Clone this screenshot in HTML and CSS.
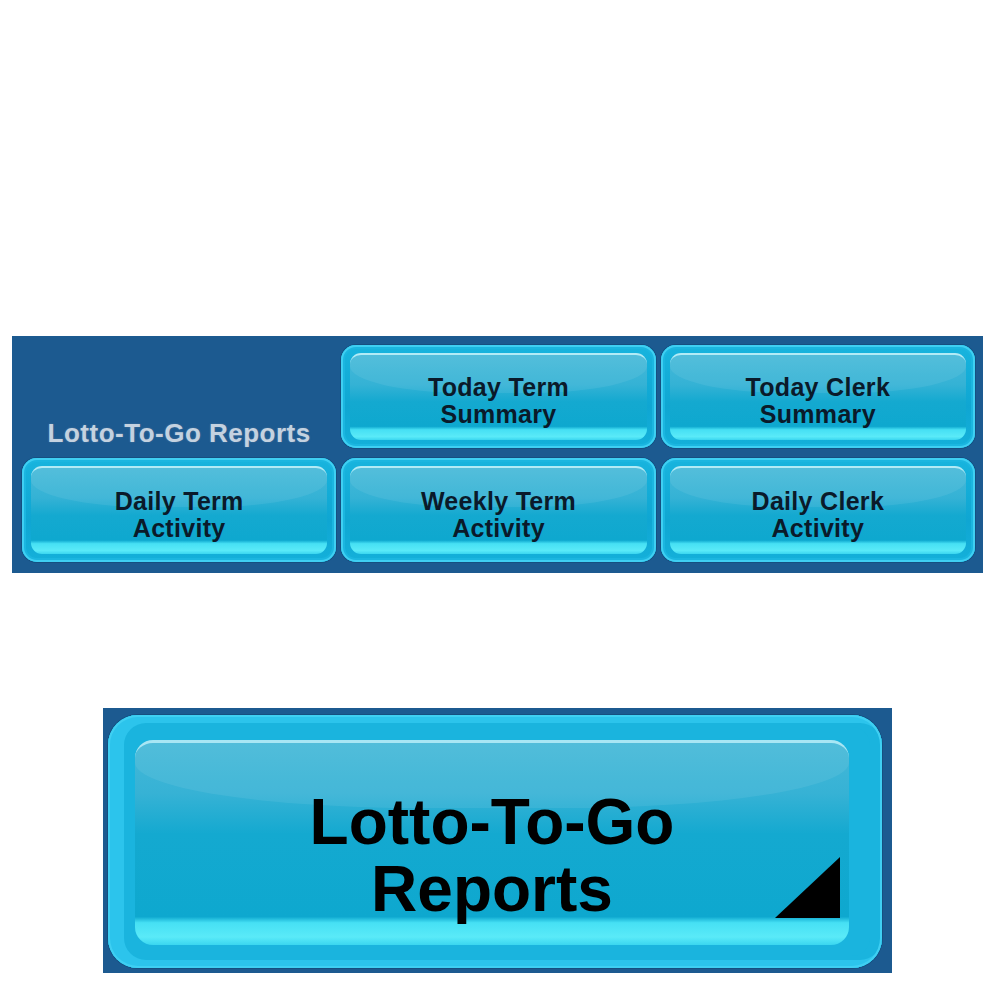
FILE: index.html
```html
<!DOCTYPE html>
<html lang="en">
<head>
    <meta charset="UTF-8">
    <meta name="viewport" content="width=device-width, initial-scale=1.0">
    <title>Lotto-To-Go Reports</title>
    <link rel="stylesheet" href="styles.css">
</head>
<body>
    <div class="page">
        <!-- report menu -->
        <div class="panel report-menu">
            <div class="menu-title">Lotto-To-Go Reports</div>
            <button class="key" type="button"><span class="face">Today Term<br>Summary</span></button>
            <button class="key" type="button"><span class="face">Today Clerk<br>Summary</span></button>
            <button class="key" type="button"><span class="face">Daily Term<br>Activity</span></button>
            <button class="key" type="button"><span class="face">Weekly Term<br>Activity</span></button>
            <button class="key" type="button"><span class="face">Daily Clerk<br>Activity</span></button>
        </div>

        <!-- big launcher button -->
        <div class="panel launcher">
            <button class="key key-big" type="button">
                <span class="face">Lotto-To-Go<br>Reports
                    <svg class="corner" viewBox="0 0 65 61" width="65" height="61">
                        <polygon points="65,0 65,61 0,61" fill="#000"/>
                    </svg>
                </span>
            </button>
        </div>
    </div>
</body>
</html>
```

FILE: styles.css
```css
body {
    margin: 0;
    background-color: #fff;
    font-family: "Liberation Sans", Arial, sans-serif;
}

.page {
    padding-top: 336px;
}

.panel {
    background-color: #1c5a90;
}

.report-menu {
    width: 971px;
    height: 237px;
    box-sizing: border-box;
    margin-left: 12px;
    padding: 9px 8px 11px 10px;
    display: grid;
    grid-template-columns: repeat(3, 1fr);
    grid-template-rows: 103px 104px;
    column-gap: 5px;
    row-gap: 10px;
}

.menu-title {
    align-self: end;
    text-align: center;
    color: #c4d2e0;
    font-size: 26px;
    font-weight: bold;
    letter-spacing: 0.5px;
    line-height: 26px;
    padding-bottom: 2px;
    text-shadow: 0 0 2px #52789c;
}

/* glossy cyan button */
.key {
    display: flex;
    margin: 0;
    padding: 8px 9px;
    border: none;
    border-radius: 15px;
    background: linear-gradient(#18b4de, #0fa6d2 60%, #14b0da);
    box-shadow: inset 0 0 0 2px #3fcff2, inset 0 0 0 4px #1bb6e0, 0 0 0 1px #154f80;
    font-family: inherit;
    cursor: pointer;
}

.face {
    position: relative;
    isolation: isolate;
    flex: 1;
    display: flex;
    align-items: center;
    justify-content: center;
    text-align: center;
    border-radius: 11px;
    border-top: 2px solid #b2ebf6;
    padding-top: 7px;
    background: linear-gradient(#46b9d9, #34b2d5 35%, #14a9d0 55%, #0ea8cf 84%, #46e0f4 88%, #5aeaf8 96%, #3ad6f0 100%);
    color: #0a1a2a;
    font-size: 25px;
    font-weight: bold;
    letter-spacing: 0.3px;
    line-height: 27px;
    overflow: hidden;
}

/* soft gloss over the top half */
.face::before {
    content: "";
    position: absolute;
    z-index: -1;
    left: 0;
    right: 0;
    top: 0;
    height: 45%;
    background: rgba(255, 255, 255, 0.07);
    border-radius: 0 0 40% 40% / 0 0 70% 70%;
}

.launcher {
    width: 789px;
    height: 265px;
    box-sizing: border-box;
    margin: 135px 0 0 103px;
    padding: 7px 10px 5px 5px;
    display: flex;
}

.key-big {
    flex: 1;
    padding: 25px 33px 23px 27px;
    border-radius: 30px;
    background: #1ab4de;
    box-shadow: inset 0 0 0 2px #3fcff2, inset 8px 0 0 8px #2cc4ec, inset 0 0 0 12px #1ab4de, 0 0 0 1px #154f80;
}

.key-big .face {
    border-radius: 18px;
    border-top: 3px solid #a8e6f4;
    background: linear-gradient(#44b8d8, #36b2d5 25%, #14a9d0 45%, #0ea8cf 86%, #46e0f4 89%, #5aeaf8 96%, #3ad6f0 100%);
    color: #000;
    font-size: 64px;
    line-height: 67px;
    letter-spacing: 0;
    padding-top: 24px;
}

.key-big .face::before {
    height: 32%;
}

.corner {
    position: absolute;
    right: 9px;
    bottom: 27px;
}
```
